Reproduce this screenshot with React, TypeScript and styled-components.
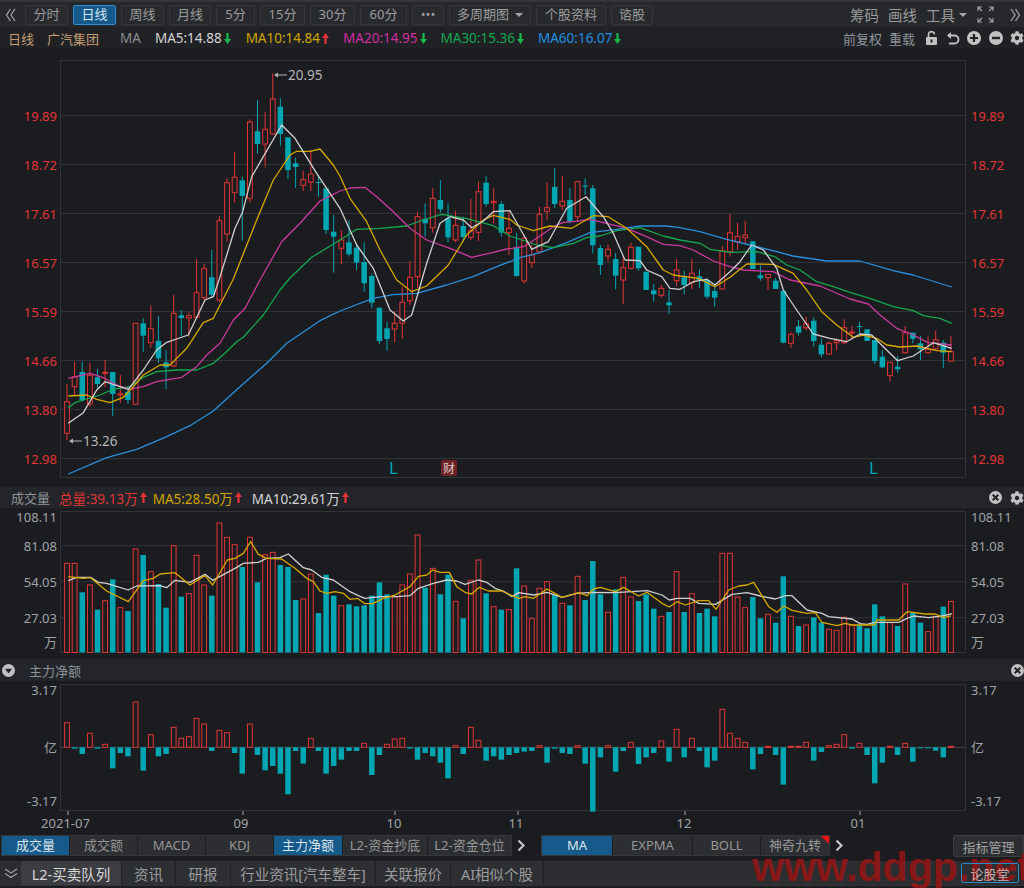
import React from 'react';
import styled, { createGlobalStyle } from 'styled-components';
import { FaCog } from 'react-icons/fa';

const FONT = `"Noto Sans", "Noto Sans CJK SC", sans-serif`;
const RED = '#e23535';
const TEAL = '#00a6b2';
const GRID = '#313338';
const PANEL = '#1b1c20';

// body top, body bottom, wick top, wick bottom (page pixels)
const CANDLES: number[][] = [
  [401.7, 433.3, 384, 440], [376.7, 386.7, 361.7, 395], [372, 400, 361.7, 401.7], [375.3, 404, 363, 406.7], [377.3, 384, 369, 388],
  [372.3, 373, 360, 387], [372, 394, 372, 416], [393.7, 395, 375, 403], [391.7, 400, 386.7, 404], [323.3, 404.3, 323, 405],
  [323.3, 335.7, 318.3, 351.7], [328.7, 342.7, 305.3, 347.7], [340.7, 358.3, 316, 362.7], [362.3, 367.3, 350, 389], [313.3, 366, 295, 367],
  [315.3, 318, 310, 336], [315.7, 318, 312.3, 336.7], [292.7, 317.3, 259, 318], [268.7, 297.7, 264, 300], [277.3, 295, 250, 298],
  [220.7, 300, 216, 302], [182.7, 234, 178, 241.7], [177.3, 192.7, 152, 202.7], [180.3, 196, 176.7, 240.7], [122, 198.3, 119.3, 202.7],
  [131.3, 144, 100, 154], [129.3, 144, 111.7, 167.3], [99, 134, 73.3, 135], [106.7, 134, 98.3, 145.7], [137.3, 170, 137, 179],
  [163.3, 167, 157.7, 188], [179.7, 185.3, 170.7, 191], [174, 182, 150, 191], [182, 182.7, 175, 196.7], [188.3, 230, 188, 234],
  [231.7, 236.7, 215, 272.7], [240, 248.3, 230, 264], [242.3, 254.3, 220, 256.7], [247.7, 262.7, 243, 270], [262, 283.3, 242.3, 291.7],
  [276, 302.7, 273.3, 308.3], [307.7, 341, 307.7, 344.3], [328.3, 339, 321.7, 350.7], [323.3, 329, 311, 342.3], [302.3, 323.3, 286.7, 339],
  [277.3, 300.7, 261, 305], [216.7, 276.7, 211.7, 288], [218.7, 223.3, 203.3, 236.7], [198.3, 227.7, 188.3, 232.7], [200, 209.3, 180, 212.7],
  [218.3, 237.3, 203.3, 242.3], [225.3, 240, 210.7, 242.3], [226, 237, 216.7, 242.3], [230.7, 237.3, 199, 240], [191.7, 232.3, 181.7, 241],
  [182.7, 204, 175.7, 206.7], [201.3, 202.7, 188.3, 223.3], [204, 232.7, 201, 236.7], [228.3, 232.7, 211.7, 255], [247.3, 276, 232.7, 276.7],
  [238.3, 281, 235, 283.3], [255, 262.7, 245, 268.3], [214.3, 251.7, 206.7, 252.7], [207.7, 211.3, 182.3, 220], [187, 204, 168.3, 208.3],
  [201.3, 206, 176, 210], [200, 221.7, 188.3, 223.3], [181.7, 216.7, 180.7, 221.7], [185.7, 186.3, 178.3, 195], [188.3, 245.3, 185, 253.3],
  [248, 265, 245, 275], [249.3, 256, 244.3, 261.7], [259, 275.7, 252.7, 289.3], [267.7, 280, 256.7, 304], [247.3, 268.3, 242.7, 269.3],
  [246.7, 268.3, 246.7, 270.7], [271.7, 290, 271.7, 290], [290.3, 294.3, 284, 301.7], [288.3, 295.3, 285, 297.7], [302.3, 305.3, 290, 314],
  [270, 280.7, 259, 286], [277.3, 285, 270.7, 294.3], [273.3, 282.7, 258.7, 289.3], [276.3, 280, 269.3, 288], [280, 296.7, 278.3, 299],
  [291, 297.7, 283.3, 306.7], [250.7, 289, 246, 289.3], [232.7, 251.7, 214, 256.7], [236.3, 241.7, 222.7, 250], [235, 237.7, 220.7, 244],
  [241.3, 269, 241.3, 269], [275.3, 278.3, 265.3, 280.7], [274.3, 277.7, 274.3, 290], [280.7, 289, 278, 289], [290.7, 342.7, 290.7, 343.3],
  [334.3, 343.3, 332.3, 347.7], [326.3, 332.7, 320, 335.7], [323.7, 327.7, 316.7, 330], [320.7, 341, 317.3, 346.7], [344.7, 354.3, 338.3, 357.3],
  [343.3, 354, 341.7, 354.3], [340.7, 342.7, 338.3, 350], [327.7, 342.7, 319.3, 344], [332, 333, 326, 340], [326, 326.7, 321.7, 335],
  [329.3, 341, 329.3, 341], [340, 361, 340, 364], [356.7, 367.3, 350, 368.3], [362.3, 375.7, 362.3, 381.7], [366.7, 369.3, 356, 372.7],
  [332.7, 352.7, 326, 353.3], [332.7, 338.7, 332.7, 343.3], [343.3, 349.3, 336, 360], [349.3, 352.7, 336.7, 353.3], [339.7, 349, 330.7, 350],
  [342.7, 352.7, 340, 368.3], [351.7, 361, 336, 361.7],
];

const COLORS = 'rrcrcrcrcr' + 'crccrcrrrc' + 'rrrcrcrrcc' + 'crrcccrccc' + 'cccrrrrcrc' + 'crcrrcrcrc' + 'rrrrcrcrcc' + 'crcrrcccrc' + 'rcrcccrrrr' + 'ccrccrcrcc' + 'rrrrccccrc' + 'rccrrcr';

// bar tops in the volume panel, 3x zoomed units from y=505
const VOLUME = [
  175, 175, 262, 240, 314, 287, 223, 308, 318, 132, 150, 200, 237, 308, 122, 275, 266, 151, 240, 272, 54, 97, 119, 186, 97, 232, 149, 142, 180, 186,
  285, 282, 207, 324, 209, 272, 302, 298, 304, 301, 272, 232, 268, 275, 240, 207, 90, 248, 190, 268, 209, 289, 340, 226, 165, 265, 305, 314, 314,
  190, 243, 341, 250, 230, 270, 295, 301, 214, 285, 168, 268, 322, 253, 217, 276, 288, 268, 311, 334, 321, 200, 321, 266, 324, 311, 334, 145, 145,
  276, 308, 276, 340, 328, 353, 214, 334, 363, 360, 337, 353, 373, 376, 337, 360, 360, 370, 298, 334, 353, 363, 237, 324, 353, 380, 334, 305, 289,
];

// bar ends in the net flow panel, 3x zoomed units from y=680; zero line at 202
const NET_FLOW = [
  128, 206, 222, 160, 206, 193, 265, 219, 229, 66, 272, 164, 229, 222, 142, 175, 170, 115, 132, 213, 151, 158, 219, 281, 132, 225, 271, 258, 281, 343,
  213, 251, 175, 213, 281, 258, 239, 213, 213, 190, 285, 225, 193, 177, 175, 206, 239, 219, 229, 248, 295, 197, 222, 142, 181, 242, 229, 239, 225,
  219, 215, 213, 197, 248, 206, 219, 222, 197, 251, 395, 232, 197, 275, 213, 187, 252, 232, 219, 183, 245, 148, 232, 175, 213, 262, 242, 88, 160,
  175, 187, 268, 222, 199, 225, 314, 199, 199, 187, 242, 216, 197, 193, 164, 206, 190, 225, 310, 248, 199, 225, 190, 245, 205, 205, 212, 232, 199,
];

type Pt = [number, number];

const MA5: Pt[] = [[68.3, 423.3], [83.3, 412.7], [96.7, 390], [105, 381.7], [115, 385], [128.3, 389.3], [143.3, 370], [156.7, 350], [166.7, 342.3], [188.3, 335], [205, 300], [213.3, 296.7], [219, 280], [235, 228.3], [242.7, 211.7], [251.7, 176.7], [263.3, 156.7], [281.7, 125], [295, 138.3], [316.7, 173.3], [340, 208.3], [356.7, 245], [373.3, 268.3], [390, 310], [403.3, 321], [411.7, 315], [426.7, 263.3], [440, 223.3], [450, 216.7], [463.3, 220], [471.7, 227.7], [483.3, 221], [493.3, 211.7], [510, 210.7], [531.7, 249.3], [548.3, 241.7], [566.7, 208.3], [586, 196.7], [603.3, 216.7], [613.3, 233.3], [625, 260], [640, 260.7], [646.7, 270], [661.7, 276.7], [670, 288.3], [680, 289.3], [693.3, 281.7], [706.7, 279.3], [715, 285], [730, 271.7], [740, 261.7], [751.7, 245], [763.3, 250], [776.7, 268.3], [783.3, 290], [796.7, 310], [813.3, 334], [830, 338.3], [846.7, 341.7], [860, 334], [871.7, 335], [883.3, 346.7], [897.7, 360.7], [913.3, 356], [933.3, 342.7], [951.7, 348.3]];
const MA10: Pt[] = [[68.3, 396], [86.7, 395], [96.7, 399.3], [110, 402.7], [123.3, 397.3], [133.3, 386.7], [143.3, 375], [160, 365], [170, 365], [186.7, 348.3], [203.3, 322.7], [213.3, 318.3], [233.3, 279], [256.7, 220], [273.3, 180], [290, 155], [296.7, 151.3], [310, 151.3], [320, 149], [333.3, 165], [340, 176], [350, 198.3], [366.7, 221.7], [380, 250], [396.7, 280], [411.7, 291.7], [426.7, 286], [448.3, 265], [466.7, 235], [483.3, 220], [493.3, 215.3], [510, 219.3], [516.7, 225], [533.3, 230.7], [550, 226], [571.7, 228.3], [593.3, 215.7], [608.3, 216.7], [626.7, 228.3], [646.7, 246.7], [663.3, 270], [673.3, 275], [680, 276], [698.3, 278.3], [715, 286.7], [730, 277.3], [746.7, 264], [773.3, 264.3], [793.3, 273.3], [806.7, 290], [821.7, 311.7], [836.7, 325], [853.3, 337.3], [863.3, 335], [876.7, 338.3], [886.7, 345], [900, 347], [916.7, 346], [936.7, 350.7], [951.7, 351.7]];
const MA20: Pt[] = [[68.3, 378.3], [90, 373.3], [103.3, 377.7], [116.7, 385], [130, 389.3], [143.3, 386.7], [156.7, 381.7], [181.7, 377.3], [196.7, 366.7], [206.7, 355], [220, 343.3], [233.3, 320], [245, 308.3], [260, 280], [281.7, 241.7], [300, 223.3], [320, 201], [340, 191], [350, 188], [365, 187.3], [376.7, 196.7], [393.3, 211.7], [410, 228.3], [426.7, 240], [450, 248.3], [471.7, 257.3], [493.3, 252.3], [506.7, 249], [523.3, 246.7], [536.7, 238.3], [553.3, 226.7], [563.3, 222.3], [573.3, 221.7], [590, 219.3], [606.7, 223.3], [626.7, 228.3], [646.7, 236.7], [663.3, 244.3], [680, 245.7], [693.3, 250], [713.3, 261], [730, 266.7], [743.3, 270], [773.3, 271.7], [790, 280], [820, 286], [850, 299], [868.3, 304], [880, 315], [896.7, 328.3], [913.3, 335], [928.3, 342.7], [951.7, 345]];
const MA30: Pt[] = [[68.3, 407.7], [75, 402.7], [83.3, 400], [100, 395], [113, 389.3], [130, 386.7], [143.3, 377.3], [156.7, 371.7], [176.7, 370], [196.7, 370], [213.3, 363.3], [223, 355], [236.7, 341.7], [243.3, 337.3], [263.3, 315], [280, 290], [290, 278], [311.7, 257.3], [340, 240], [356.7, 229.3], [380, 228.3], [406.7, 226], [423, 220], [441.7, 214.3], [466.7, 218.7], [493.3, 225.7], [510, 236], [536.7, 245], [553.3, 247.7], [573.3, 243.3], [586.7, 237.7], [600, 236], [616.7, 230.7], [640, 227.7], [663.3, 236], [680, 240], [700, 243.3], [710, 249.3], [730, 252.3], [756.7, 251.7], [775, 256.7], [786.7, 265], [800, 270], [816.7, 281.7], [833.3, 286.7], [850, 292.3], [870, 298.3], [893.3, 306.7], [913.3, 310.7], [923.3, 315.7], [940, 318.3], [951.7, 323.3]];
const MA60: Pt[] = [[68.3, 474], [106.7, 457.7], [136.7, 449.3], [166.7, 436.7], [190, 425.7], [213.3, 411], [240, 386.7], [266.7, 363.3], [286.7, 343.3], [320, 320.7], [340, 311], [373, 298.3], [393, 294.7], [416.7, 293.3], [446.7, 285], [473, 276.7], [496.7, 266.7], [520, 257.7], [540, 252.7], [566.7, 242.7], [590, 232.7], [616.7, 229.3], [640, 226], [666.7, 226], [680, 227.7], [700, 231.7], [726.7, 239.3], [750, 245], [776.7, 251.7], [793, 256], [826.7, 261], [860, 261], [893, 270.7], [913, 275], [951.7, 287]];

// volume averages, 3x zoomed units, x from 0 / y from 505
const zoomedVol = (left: Pt[], right: Pt[]): Pt[] =>
  [...left.map(([x, y]): Pt => [x / 3, 505 + y / 3]), ...right.map(([x, y]): Pt => [512 + x / 3, 505 + y / 3])];

const VOL_MA5 = zoomedVol(
  [[205, 215], [250, 220], [272, 218], [320, 258], [385, 290], [430, 227], [460, 220], [480, 207], [525, 203], [570, 240], [615, 212], [638, 240], [682, 165], [705, 160], [730, 145], [752, 110], [775, 148], [800, 160], [845, 162], [885, 190], [920, 220], [940, 230], [960, 258], [980, 265], [1005, 260], [1030, 265], [1050, 283], [1072, 280], [1095, 296], [1118, 296], [1150, 280], [1185, 270], [1230, 245], [1255, 214], [1280, 210], [1298, 195], [1320, 202], [1348, 202], [1370, 245], [1395, 262], [1415, 267], [1438, 247], [1465, 258], [1505, 258], [1536, 272]],
  [[20, 280], [40, 275], [65, 280], [105, 252], [150, 277], [200, 263], [225, 272], [245, 252], [265, 247], [310, 260], [335, 247], [380, 273], [405, 262], [450, 295], [472, 306], [495, 290], [520, 300], [560, 287], [590, 287], [612, 313], [650, 255], [680, 243], [705, 240], [725, 232], [770, 305], [795, 322], [816, 303], [840, 316], [885, 325], [910, 323], [930, 352], [975, 362], [1000, 355], [1020, 360], [1088, 360], [1095, 345], [1160, 345], [1185, 320], [1240, 327], [1270, 327], [1295, 338], [1316, 333]],
);
const VOL_MA10 = zoomedVol(
  [[205, 227], [230, 217], [272, 217], [295, 232], [320, 235], [385, 255], [410, 243], [480, 242], [500, 248], [525, 226], [570, 232], [615, 208], [638, 226], [705, 190], [730, 175], [775, 172], [800, 160], [840, 158], [865, 147], [910, 188], [935, 195], [965, 217], [1000, 225], [1050, 260], [1075, 272], [1095, 280], [1140, 275], [1190, 275], [1230, 272], [1255, 250], [1300, 235], [1340, 225], [1370, 228], [1395, 238], [1435, 225], [1460, 232], [1485, 250], [1510, 258], [1536, 275]],
  [[20, 263], [65, 270], [105, 262], [150, 277], [195, 265], [240, 262], [310, 263], [405, 257], [450, 270], [472, 285], [495, 280], [535, 280], [560, 295], [610, 298], [660, 268], [705, 263], [745, 273], [790, 282], [820, 272], [840, 272], [885, 315], [930, 325], [950, 335], [1020, 342], [1045, 356], [1065, 358], [1088, 352], [1160, 352], [1185, 340], [1205, 333], [1250, 338], [1290, 333], [1320, 326]],
);

const barX = (i: number) => 67 + 7.62 * i;
const linePoints = (pts: Pt[]) => pts.map(p => p.join(',')).join(' ');

const GlobalStyle = createGlobalStyle`
  html, body { margin: 0; padding: 0; background: #1b1c20; }
  body { font-family: ${FONT}; }
`;

const Page = styled.div`
  position: relative;
  width: 1024px;
  height: 888px;
  overflow: hidden;
  display: flex;
  flex-direction: column;
  background: ${PANEL};
  color: #9b9b9b;
  font-size: 13px;
`;

const Toolbar = styled.div`
  height: 25px;
  flex: none;
  box-sizing: content-box;
  border-top: 2px solid #34363a;
  background: #26282c;
  display: flex;
  align-items: center;
  gap: 5px;
  padding-left: 5px;
`;

const BackArrows = styled.svg`
  width: 11px;
  height: 14px;
  margin-right: 4px;
`;

const PeriodButton = styled.div<{ $w: number; $active?: boolean }>`
  width: ${p => p.$w}px;
  height: 20px;
  box-sizing: border-box;
  display: flex;
  align-items: center;
  justify-content: center;
  gap: 6px;
  border: 1px solid ${p => (p.$active ? '#2f8fd0' : '#36383c')};
  border-radius: 2px;
  background: ${p => (p.$active ? '#155a8a' : '#282a2e')};
  color: ${p => (p.$active ? '#d5e4ee' : '#9b9b9b')};
  line-height: 1;
`;

const Caret = styled.span`
  width: 0;
  height: 0;
  border-left: 4px solid transparent;
  border-right: 4px solid transparent;
  border-top: 4px solid #a5a5a5;
`;

const ToolbarTools = styled.div`
  margin-left: auto;
  display: flex;
  align-items: center;
  gap: 9px;
  padding-right: 3px;
  font-size: 14.5px;
`;

const ToolCaret = styled(Caret)`
  margin-left: -5px;
`;

const FullscreenGlyph = styled.svg`
  width: 17px;
  height: 17px;
  margin: 0 7px 0 1px;
`;

const QuoteBar = styled.div`
  height: 22px;
  flex: none;
  background: #1f2125;
  display: flex;
  align-items: center;
  padding-left: 8px;
  font-size: 13.5px;
  white-space: nowrap;
`;

const QuoteTitle = styled.span<{ $gap: number }>`
  font-size: 13px;
  color: #c49d72;
  margin-right: ${p => p.$gap}px;
`;

const QuoteItem = styled.span<{ $color: string; $gap?: number }>`
  display: inline-flex;
  align-items: center;
  gap: 2px;
  font-size: 13.5px;
  color: ${p => p.$color};
  margin-right: ${p => p.$gap ?? 14}px;
`;

const QuoteTools = styled.div`
  margin-left: auto;
  display: flex;
  align-items: center;
  gap: 7px;
  font-size: 13px;
  color: #8d939b;
`;

const IconRow = styled.div`
  display: flex;
  align-items: center;
  gap: 7.5px;
  margin-left: 3px;
  color: #b4b4b4;
`;

const Chart = styled.svg`
  display: block;
  flex: none;
  width: 1024px;
  text {
    font-family: ${FONT};
    font-size: 13px;
    dominant-baseline: central;
  }
`;

const SectionBar = styled.div<{ $h: number }>`
  height: ${p => p.$h}px;
  flex: none;
  background: #23252a;
  display: flex;
  align-items: center;
  padding: 0 0 0 11px;
  font-size: 13px;
  white-space: nowrap;
`;

const SectionName = styled.span`
  color: #8f9499;
  margin-right: 9px;
`;

const SectionIcons = styled.div`
  margin-left: auto;
  display: flex;
  align-items: center;
  gap: 8px;
  color: #b4b4b4;
`;

const CollapseSlot = styled.div`
  width: 13px;
  margin: 0 14px 0 -9px;
  display: flex;
  color: #c4c4c4;
`;

const IndicatorRow = styled.div`
  height: 23px;
  flex: none;
  padding: 2px 0 0 1px;
  display: flex;
  align-items: flex-start;
`;

const TabGroup = styled.div`
  display: flex;
  height: 21px;
  border: 1px solid #34363a;
  box-sizing: border-box;
  gap: 1px;
  background: #1d1e22;
`;

const IndicatorTab = styled.div<{ $w: number; $active?: boolean }>`
  position: relative;
  width: ${p => p.$w}px;
  display: flex;
  align-items: center;
  justify-content: center;
  background: ${p => (p.$active ? '#155a8a' : '#2c2e32')};
  color: ${p => (p.$active ? '#dfe6ec' : '#979797')};
  font-size: 13px;
  line-height: 1;
  white-space: nowrap;
`;

const CornerFlag = styled.span`
  position: absolute;
  top: 0;
  right: 0;
  border-top: 8px solid #ee1111;
  border-left: 8px solid transparent;
`;

const MoreArrow = styled.svg<{ $right: number }>`
  width: 10px;
  height: 21px;
  margin: 0 ${p => p.$right}px 0 4px;
  flex: none;
`;

const ManageButton = styled.div`
  width: 71px;
  height: 22px;
  box-sizing: border-box;
  margin-left: auto;
  display: flex;
  align-items: center;
  justify-content: center;
  border: 1px solid #3d3f43;
  border-radius: 3px 0 0 3px;
  background: #2c2e32;
  color: #a2a2a2;
`;

const BottomBar = styled.div`
  height: 24px;
  margin-top: 3px;
  flex: none;
  background: #2b2d31;
  display: flex;
  align-items: stretch;
  border-bottom: 1px solid #323438;
`;

const CollapseDown = styled.div`
  width: 21px;
  display: flex;
  align-items: center;
  justify-content: center;
`;

const BottomTab = styled.div<{ $w: number; $active?: boolean }>`
  width: ${p => p.$w}px;
  display: flex;
  align-items: center;
  justify-content: center;
  border-right: 1px solid #1f2023;
  background: ${p => (p.$active ? '#3b3d41' : '#2d2f33')};
  color: ${p => (p.$active ? '#d6d6d6' : '#9b9b9b')};
  font-size: 14.5px;
  white-space: nowrap;
`;

const ForumButton = styled.div`
  position: relative;
  z-index: 1;
  width: 58px;
  height: 20px;
  margin: 2px 5px 0 auto;
  box-sizing: border-box;
  display: flex;
  align-items: center;
  justify-content: center;
  border: 1px solid #2f86c8;
  border-radius: 2px;
  color: #c4b4b4;
`;

const Watermark = styled.div`
  position: absolute;
  left: 752px;
  top: 843px;
  font-family: "Liberation Sans", sans-serif;
  font-weight: 700;
  font-size: 41px;
  line-height: 48px;
  color: rgba(150, 20, 20, 0.9);
  white-space: nowrap;
  pointer-events: none;
`;

const Arrow = ({ up, color }: { up?: boolean; color: string }) => (
  <svg width="7" height="11" viewBox="0 0 7 11">
    <path d={up ? 'M3.5 0 7 5H4.6V11H2.4V5H0Z' : 'M3.5 11 7 6H4.6V0H2.4V6H0Z'} fill={color} />
  </svg>
);

const RoundIcon = ({ kind, size = 14 }: { kind: 'plus' | 'minus' | 'close' | 'down'; size?: number }) => (
  <svg width={size} height={size} viewBox="0 0 14 14">
    <circle cx="7" cy="7" r="7" fill="#c2c2c2" />
    {kind === 'plus' && <path d="M3 7h8M7 3v8" stroke="#1f2125" strokeWidth="2.2" />}
    {kind === 'minus' && <path d="M3 7h8" stroke="#1f2125" strokeWidth="2.4" />}
    {kind === 'close' && <path d="M4 4l6 6M10 4l-6 6" stroke="#23252a" strokeWidth="2.2" />}
    {kind === 'down' && <path d="M3.2 5h7.6L7 10.2Z" fill="#23252a" />}
  </svg>
);

const LockIcon = () => (
  <svg width="13" height="14" viewBox="0 0 13 14">
    <path d="M3.5 6V3.8a3 3 0 0 1 6-.4" fill="none" stroke="#c2c2c2" strokeWidth="1.6" />
    <rect x="1" y="6" width="11" height="8" rx="1" fill="#c2c2c2" />
    <rect x="5.5" y="8.5" width="2" height="3" fill="#1f2125" />
  </svg>
);

const UndoIcon = () => (
  <svg width="14" height="14" viewBox="0 0 14 14">
    <path d="M3.5 4.5H8.5a4 4 0 0 1 0 8H3" fill="none" stroke="#c2c2c2" strokeWidth="1.8" />
    <path d="M5 1 1 4.5 5 8Z" fill="#c2c2c2" />
  </svg>
);

const FullscreenIcon = () => (
  <FullscreenGlyph viewBox="0 0 17 17" fill="none" stroke="#a5a5a5" strokeWidth="1.1">
    <path d="M1 5V1H5M1 1 5 5M12 1H16V5M16 1 12 5M1 12V16H5M1 16 5 12M12 16H16V12M16 16 12 12" />
  </FullscreenGlyph>
);

// upper bars are hollow red, lower bars solid teal
const Bar = ({ x, top, height, up }: { x: number; top: number; height: number; up: boolean }) =>
  up ? (
    <rect x={x - 2.4} y={top} width="4.8" height={height} fill={PANEL} stroke={RED} />
  ) : (
    <rect x={x - 2.75} y={top} width="5.5" height={height} fill={TEAL} />
  );

const Candles = () => (
  <>
    {CANDLES.map(([top, bottom, wickTop, wickBottom], i) => {
      const x = barX(i);
      const isUp = COLORS[i] === 'r';
      return (
        <g key={i}>
          <line x1={x} x2={x} y1={wickTop} y2={wickBottom} stroke={isUp ? RED : TEAL} />
          <Bar x={x} top={top} height={Math.max(bottom - top, 1)} up={isUp} />
        </g>
      );
    })}
  </>
);

const Ma = ({ pts, color, width = 1.3 }: { pts: Pt[]; color: string; width?: number }) => (
  <polyline points={linePoints(pts)} fill="none" stroke={color} strokeWidth={width} strokeLinejoin="round" />
);

const PriceNote = ({ x, y, text }: { x: number; y: number; text: string }) => (
  <g>
    <path d={`M${x} ${y}l4-2.5v2h9v1h-9v2z`} fill="#b5b5b5" />
    <text x={x + 14} y={y} fill="#b5b5b5" style={{ fontSize: 13.5 }}>{text}</text>
  </g>
);

const PRICE_AXIS: [number, string][] = [
  [115.5, '19.89'], [164.5, '18.72'], [213.5, '17.61'], [262.5, '16.57'],
  [311.5, '15.59'], [360.5, '14.66'], [409.5, '13.80'], [458.5, '12.98'],
];

const PriceChart = () => (
  <Chart viewBox="0 49 1024 438" height="438">
    <rect x="60.5" y="60.5" width="905" height="417" fill="none" stroke={GRID} />
    {PRICE_AXIS.map(([y, label]) => (
      <g key={label}>
        <line x1="61" x2="965" y1={y} y2={y} stroke={GRID} />
        <text x="57" y={y} fill={RED} textAnchor="end">{label}</text>
        <text x="971" y={y} fill={RED}>{label}</text>
      </g>
    ))}
    <Candles />
    <Ma pts={MA60} color="#2a8fdc" />
    <Ma pts={MA30} color="#15a84f" />
    <Ma pts={MA20} color="#cc3a9e" />
    <Ma pts={MA10} color="#d8a800" />
    <Ma pts={MA5} color="#d0d0d0" />
    <PriceNote x={274} y={75} text="20.95" />
    <PriceNote x={69} y={441} text="13.26" />
    <text x="389" y="467" fill={TEAL} style={{ fontSize: 17 }}>L</text>
    <text x="869" y="467" fill={TEAL} style={{ fontSize: 17 }}>L</text>
    <rect x="441" y="460" width="16" height="16" rx="2" fill="#6e2424" />
    <text x="449" y="468" fill="#d8c8c8" textAnchor="middle" style={{ fontSize: 12 }}>财</text>
  </Chart>
);

const VOLUME_AXIS: [number, string, number | null][] = [
  [517, '108.11', null], [546, '81.08', 545.7], [582, '54.05', 581.7], [617.5, '27.03', 617.7], [642, '万', null],
];

const VolumeChart = () => (
  <Chart viewBox="0 508 1024 151" height="151">
    <rect x="60.5" y="511.5" width="905" height="141" fill="none" stroke={GRID} />
    {VOLUME_AXIS.map(([y, label, grid]) => (
      <g key={label}>
        {grid && <line x1="61" x2="965" y1={grid} y2={grid} stroke={GRID} />}
        <text x="57" y={y} fill="#a0a3a6" textAnchor="end">{label}</text>
        <text x="971" y={y} fill="#a0a3a6">{label}</text>
      </g>
    ))}
    {VOLUME.map((v, i) => {
      const top = 505 + v / 3;
      return <Bar key={i} x={barX(i)} top={top} height={652.5 - top} up={COLORS[i] === 'r'} />;
    })}
    <Ma pts={VOL_MA10} color="#d0d0d0" />
    <Ma pts={VOL_MA5} color="#d8a800" />
  </Chart>
);

const DATE_TICKS: [number, number, string][] = [
  [68, 65.5, '2021-07'], [243, 241, '09'], [395, 394, '10'], [518, 516, '11'], [685, 684, '12'], [860, 858, '01'],
];

const NET_AXIS: [number, string][] = [[690, '3.17'], [747, '亿'], [801, '-3.17']];

const NetFlowChart = () => (
  <Chart viewBox="0 681 1024 152" height="152">
    <rect x="60.5" y="684.5" width="905" height="126" fill="none" stroke={GRID} />
    <line x1="61" x2="965" y1="747.3" y2="747.3" stroke="#45474b" />
    {NET_AXIS.map(([y, label]) => (
      <g key={label}>
        <text x="57" y={y} fill="#a0a3a6" textAnchor="end">{label}</text>
        <text x="971" y={y} fill="#a0a3a6">{label}</text>
      </g>
    ))}
    {NET_FLOW.map((v, i) => {
      const end = 680 + v / 3;
      const isUp = end < 747.3;
      return <Bar key={i} x={barX(i)} top={isUp ? end : 747.3} height={Math.abs(end - 747.3)} up={isUp} />;
    })}
    {DATE_TICKS.map(([tick, labelX, label]) => (
      <g key={label}>
        <line x1={tick} x2={tick} y1="811" y2="815" stroke="#a8a8a8" />
        <text x={labelX} y="822.5" fill="#a0a3a6" textAnchor="middle">{label}</text>
      </g>
    ))}
  </Chart>
);

const ChevronRight = ({ right }: { right: number }) => (
  <MoreArrow $right={right} viewBox="0 0 10 21">
    <path d="M2.5 5.5 7.5 10.5 2.5 15.5" fill="none" stroke="#c4c4c4" strokeWidth="2.2" />
  </MoreArrow>
);

const App = () => (
  <Page>
    <GlobalStyle />
    <Toolbar>
      <BackArrows viewBox="0 0 11 14">
        <path d="M5.5 1 1.5 7l4 6M10 1 6 7l4 6" fill="none" stroke="#a0a0a0" strokeWidth="1.3" />
      </BackArrows>
      <PeriodButton $w={43}>分时</PeriodButton>
      <PeriodButton $w={43} $active>日线</PeriodButton>
      <PeriodButton $w={43}>周线</PeriodButton>
      <PeriodButton $w={42}>月线</PeriodButton>
      <PeriodButton $w={39}>5分</PeriodButton>
      <PeriodButton $w={45}>15分</PeriodButton>
      <PeriodButton $w={45}>30分</PeriodButton>
      <PeriodButton $w={47}>60分</PeriodButton>
      <PeriodButton $w={32}>•••</PeriodButton>
      <PeriodButton $w={82}>多周期图<Caret /></PeriodButton>
      <PeriodButton $w={70}>个股资料</PeriodButton>
      <PeriodButton $w={42}>谘股</PeriodButton>
      <ToolbarTools>
        <span>筹码</span>
        <span>画线</span>
        <span>工具</span>
        <ToolCaret />
        <FullscreenIcon />
        <svg width="11" height="14" viewBox="0 0 11 14">
          <path d="M1 1l4 6-4 6M5.5 1l4 6-4 6" fill="none" stroke="#a0a0a0" strokeWidth="1.3" />
        </svg>
      </ToolbarTools>
    </Toolbar>
    <QuoteBar>
      <QuoteTitle $gap={13}>日线</QuoteTitle>
      <QuoteTitle $gap={21}>广汽集团</QuoteTitle>
      <QuoteItem $color="#8d8d8d" $gap={14}>MA</QuoteItem>
      <QuoteItem $color="#d4d4d4" $gap={15}>MA5:14.88<Arrow color="#18b84a" /></QuoteItem>
      <QuoteItem $color="#d1a400">MA10:14.84<Arrow up color={RED} /></QuoteItem>
      <QuoteItem $color="#d02fa0">MA20:14.95<Arrow color="#18b84a" /></QuoteItem>
      <QuoteItem $color="#12a84e">MA30:15.36<Arrow color="#18b84a" /></QuoteItem>
      <QuoteItem $color="#1f8fe0">MA60:16.07<Arrow color="#18b84a" /></QuoteItem>
      <QuoteTools>
        <span>前复权</span>
        <span>重载</span>
        <IconRow>
          <LockIcon />
          <UndoIcon />
          <RoundIcon kind="plus" />
          <RoundIcon kind="minus" />
          <FaCog size={14} color="#c2c2c2" />
        </IconRow>
      </QuoteTools>
    </QuoteBar>
    <PriceChart />
    <SectionBar $h={21}>
      <SectionName>成交量</SectionName>
      <QuoteItem $color={RED} $gap={6}>总量:39.13万<Arrow up color={RED} /></QuoteItem>
      <QuoteItem $color="#d1a400" $gap={10}>MA5:28.50万<Arrow up color={RED} /></QuoteItem>
      <QuoteItem $color="#d4d4d4">MA10:29.61万<Arrow up color={RED} /></QuoteItem>
      <SectionIcons>
        <RoundIcon kind="close" size={13} />
        <FaCog size={14} color="#c2c2c2" />
      </SectionIcons>
    </SectionBar>
    <VolumeChart />
    <SectionBar $h={22}>
      <CollapseSlot><RoundIcon kind="down" size={13} /></CollapseSlot>
      <SectionName>主力净额</SectionName>
      <SectionIcons>
        <RoundIcon kind="close" size={13} />
      </SectionIcons>
    </SectionBar>
    <NetFlowChart />
    <IndicatorRow>
      <TabGroup>
        <IndicatorTab $w={67} $active>成交量</IndicatorTab>
        <IndicatorTab $w={67}>成交额</IndicatorTab>
        <IndicatorTab $w={67}>MACD</IndicatorTab>
        <IndicatorTab $w={67}>KDJ</IndicatorTab>
        <IndicatorTab $w={68} $active>主力净额</IndicatorTab>
        <IndicatorTab $w={84}>L2-资金抄底</IndicatorTab>
        <IndicatorTab $w={83}>L2-资金仓位</IndicatorTab>
      </TabGroup>
      <ChevronRight right={15} />
      <TabGroup>
        <IndicatorTab $w={70} $active>MA</IndicatorTab>
        <IndicatorTab $w={79}>EXPMA</IndicatorTab>
        <IndicatorTab $w={67}>BOLL</IndicatorTab>
        <IndicatorTab $w={68}>神奇九转<CornerFlag /></IndicatorTab>
      </TabGroup>
      <ChevronRight right={0} />
      <ManageButton>指标管理</ManageButton>
    </IndicatorRow>
    <BottomBar>
      <CollapseDown>
        <svg width="14" height="12" viewBox="0 0 14 12" fill="none" stroke="#a0a0a0" strokeWidth="1.3">
          <path d="M1 2l6 4 6-4M1 6.5l6 4 6-4" />
        </svg>
      </CollapseDown>
      <BottomTab $w={100} $active>L2-买卖队列</BottomTab>
      <BottomTab $w={53}>资讯</BottomTab>
      <BottomTab $w={54}>研报</BottomTab>
      <BottomTab $w={144}>行业资讯[汽车整车]</BottomTab>
      <BottomTab $w={74}>关联报价</BottomTab>
      <BottomTab $w={92}>AI相似个股</BottomTab>
      <ForumButton>论股堂</ForumButton>
    </BottomBar>
    <Watermark>www.ddgp.net</Watermark>
  </Page>
);

export default App;
